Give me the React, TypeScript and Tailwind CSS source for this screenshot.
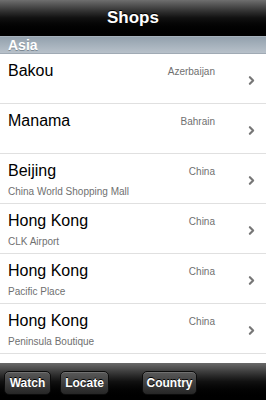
import { ChevronRight } from "lucide-react";

const shops = [
	{ city: "Bakou", country: "Azerbaijan", place: "" },
	{ city: "Manama", country: "Bahrain", place: "" },
	{ city: "Beijing", country: "China", place: "China World Shopping Mall" },
	{ city: "Hong Kong", country: "China", place: "CLK Airport" },
	{ city: "Hong Kong", country: "China", place: "Pacific Place" },
	{ city: "Hong Kong", country: "China", place: "Peninsula Boutique" },
];

function ToolButton({ label, className }: { label: string; className: string }) {
	return (
		<button
			className={`${className} h-[24px] rounded-[5px] border border-[#0c0c0c] bg-gradient-to-b from-[#5a5a5a] to-[#262626] text-white text-[12px] font-bold [text-shadow:0_-1px_0_#000] shadow-[inset_0_1px_0_rgba(255,255,255,0.15)]`}
		>
			{label}
		</button>
	);
}

export default function App() {
	return (
		<div className="w-[266px] h-[400px] flex flex-col bg-white overflow-hidden font-['Liberation_Sans',Arial,sans-serif]">
			<div className="h-[36px] shrink-0 flex items-center justify-center bg-gradient-to-b from-[#6f6f6f] via-[#111] via-50% to-black">
				<span className="text-white text-[17px] font-bold [text-shadow:0_-1px_0_#000]">Shops</span>
			</div>
			<div className="h-[18px] shrink-0 flex items-center px-[8px] bg-gradient-to-b from-[#93a1ad] to-[#b8c1ca] border-t border-[#a5b0ba] border-b border-b-[#a0aab4]">
				<span className="text-white text-[14px] font-bold [text-shadow:0_1px_0_#7d8993]">Asia</span>
			</div>
			<div className="flex-1 flex flex-col">
				{shops.map((s, i) => (
					<div key={i} className="h-[50px] shrink-0 flex items-center border-b border-[#e0e0e0] pl-[8px] pr-[8px]">
						<div className="flex-1 flex flex-col self-start pt-[7px]">
							<div className="flex items-start justify-between pr-[30px]">
								<span className="text-[16px] leading-[20px] text-black">{s.city}</span>
								<span className="text-[10px] leading-[20px] text-[#707070] mt-[1px]">{s.country}</span>
							</div>
							{s.place && (
								<span className="text-[10px] leading-[13px] text-[#707070] mt-[3px]">{s.place}</span>
							)}
						</div>
						<ChevronRight className="size-[13px] text-[#777] mt-[4px]" strokeWidth={4} />
					</div>
				))}
			</div>
			<div className="h-[37px] shrink-0 flex items-center pt-[3px] pl-[4px] bg-gradient-to-b from-[#6a6a6a] via-[#111] via-50% to-black">
				<ToolButton label="Watch" className="w-[47px]" />
				<ToolButton label="Locate" className="w-[49px] ml-[9px]" />
				<ToolButton label="Country" className="w-[55px] ml-[33px]" />
			</div>
		</div>
	);
}
